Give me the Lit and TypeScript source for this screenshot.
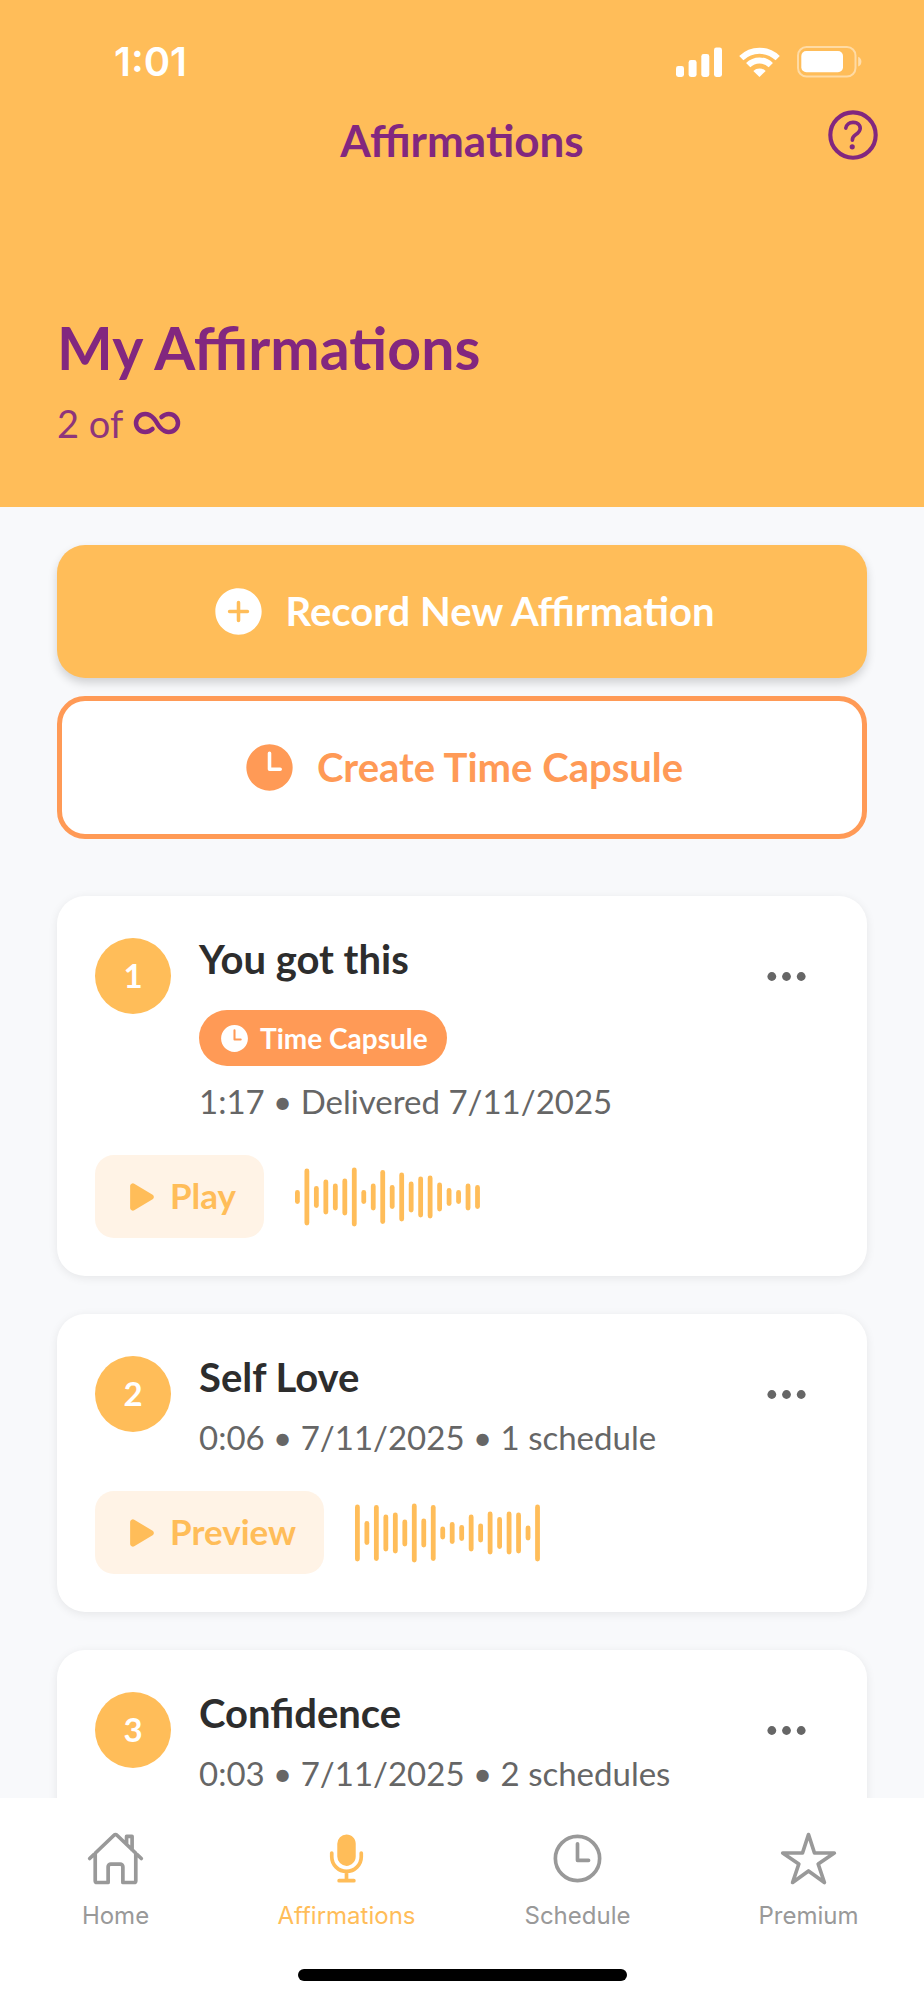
import { LitElement, html, svg, css, nothing } from "lit";
import { customElement, property } from "lit/decorators.js";

interface Affirmation {
  title: string;
  meta: string;
  capsule?: boolean;
  action?: string;
  wave?: number[];
}

const AFFIRMATIONS: Affirmation[] = [
  {
    title: "You got this",
    meta: "1:17 • Delivered 7/11/2025",
    capsule: true,
    action: "Play",
    wave: [14, 57, 22, 35, 27, 37, 59, 14, 27, 54, 24, 49, 31, 41, 43, 29, 18, 14, 27, 24],
  },
  {
    title: "Self Love",
    meta: "0:06 • 7/11/2025 • 1 schedule",
    action: "Preview",
    wave: [57, 24, 56, 37, 41, 27, 59, 29, 56, 13, 22, 16, 37, 19, 43, 32, 43, 41, 15, 57],
  },
  { title: "Confidence", meta: "0:03 • 7/11/2025 • 2 schedules" },
];

const round = (d: string, width = 32) =>
  svg`<path d=${d} fill="none" stroke="currentColor" stroke-width=${width} stroke-linecap="round" stroke-linejoin="round"/>`;
const solid = (d: string) => svg`<path d=${d} fill="currentColor"/>`;

const ICONS: Record<string, unknown> = {
  help: svg`<circle cx="256" cy="256" r="176" fill="none" stroke="currentColor" stroke-width="32"/>
    ${round("M200 202.29s.84-17.5 19.57-32.57C230.68 160.77 244 158.18 256 158c10.93-.14 20.69 1.67 26.53 4.45 10 4.76 29.47 16.38 29.47 41.09 0 26-17 37.81-36.37 50.8S251 281.43 251 296", 28)}
    <circle cx="250" cy="348" r="20" fill="currentColor"/>`,
  infinite: round(
    "M256 256s-48-96-126-96c-54.12 0-98 43-98 96s43.88 96 98 96c30 0 56.45-13.18 78-32M256 256s48 96 126 96c54.12 0 98-43 98-96s-43.88-96-98-96c-29.37 0-56.66 13.75-78 32",
    48
  ),
  add: solid(
    "M256 48C141.31 48 48 141.31 48 256s93.31 208 208 208 208-93.31 208-208S370.69 48 256 48zm80 224h-64v64a16 16 0 01-32 0v-64h-64a16 16 0 010-32h64v-64a16 16 0 0132 0v64h64a16 16 0 010 32z"
  ),
  time: solid(
    "M256 48C141.13 48 48 141.13 48 256s93.13 208 208 208 208-93.13 208-208S370.87 48 256 48zm96 240h-96a16 16 0 01-16-16V128a16 16 0 0132 0v128h80a16 16 0 010 32z"
  ),
  play: solid(
    "M133 440a35.37 35.37 0 01-17.5-4.67c-12-6.8-19.46-20-19.46-34.33V111c0-14.37 7.46-27.53 19.46-34.33a35.13 35.13 0 0135.77.45l247.85 148.36a36 36 0 010 61l-247.89 148.4A35.5 35.5 0 01133 440z"
  ),
  more: svg`<circle cx="96" cy="256" r="48" fill="currentColor"/><circle cx="256" cy="256" r="48" fill="currentColor"/><circle cx="416" cy="256" r="48" fill="currentColor"/>`,
  home: round(
    "M80 212v236a16 16 0 0016 16h96V328a24 24 0 0124-24h80a24 24 0 0124 24v136h96a16 16 0 0016-16V212M480 256L266.89 52c-5-5.28-16.69-5.34-21.78 0L32 256M400 179V64h-48v69"
  ),
  mic: svg`${round("M192 448h128M384 208v32c0 70.4-57.6 128-128 128s-128-57.6-128-128v-32M256 368v80")}
    ${solid("M256 320a78.83 78.83 0 01-56.55-24.1A80.89 80.89 0 01176 239V128a79.69 79.69 0 0180-80c44.86 0 80 35.14 80 80v111c0 44.66-35.89 81-80 81z")}`,
  clock: svg`<circle cx="256" cy="256" r="192" fill="none" stroke="currentColor" stroke-width="32"/>${round("M256 128v144h96")}`,
  star: round("M480 208H308L256 48l-52 160H32l140 96-54 160 138-100 138 100-54-160z"),
};

const icon = (name: string, size: number) =>
  html`<svg width=${size} height=${size} viewBox="0 0 512 512" aria-hidden="true">${ICONS[name]}</svg>`;

@customElement("affirmation-card")
class AffirmationCard extends LitElement {
  @property({ attribute: false }) item!: Affirmation;
  @property({ type: Number }) number = 1;

  static styles = css`
    :host {
      display: block;
      padding: 38px;
      background: #fff;
      border-radius: 28px;
      box-shadow: 0 2px 10px rgba(0, 0, 0, 0.08);
    }
    svg {
      display: block;
      flex: none;
    }
    button {
      border: 0;
      margin: 0;
      background: none;
      font: inherit;
      color: inherit;
      cursor: pointer;
    }
    .head {
      display: flex;
      align-items: flex-start;
    }
    .num {
      flex: none;
      width: 76px;
      height: 76px;
      margin: 4px 28px 0 0;
      border-radius: 50%;
      background: #ffbd59;
      color: #fff;
      font-size: 33px;
      font-weight: 700;
      line-height: 74px;
      text-align: center;
    }
    .info {
      flex: 1;
      min-width: 0;
      display: flex;
      flex-direction: column;
      align-items: flex-start;
      gap: 15px;
    }
    h2 {
      margin: 0;
      font-size: 40px;
      line-height: 50px;
      font-weight: 700;
      color: #2d2d2d;
    }
    .badge {
      display: flex;
      align-items: center;
      gap: 9px;
      margin-top: 11px;
      padding: 11px 19px;
      border-radius: 28px;
      background: #ff9a56;
      color: #fff;
      font-size: 28px;
      line-height: 34px;
      font-weight: 700;
    }
    p {
      margin: 0;
      font-size: 33px;
      line-height: 41px;
      color: #666;
    }
    .more {
      padding: 19px;
      color: #666;
    }
    .actions {
      display: flex;
      align-items: center;
      gap: 31px;
      margin-top: 33px;
      color: #ffbd59;
    }
    .play {
      display: flex;
      align-items: center;
      gap: 9px;
      padding: 20px 28px;
      border-radius: 19px;
      background: #fff3e6;
      font-size: 35px;
      line-height: 41px;
      font-weight: 700;
    }
    .play span {
      padding-bottom: 2px;
    }
  `;

  render() {
    const { title, meta, capsule, action, wave } = this.item;
    return html`
      <div class="head">
        <div class="num">${this.number}</div>
        <div class="info">
          <h2>${title}</h2>
          ${capsule ? html`<div class="badge">${icon("time", 33)}<span>Time Capsule</span></div>` : nothing}
          <p>${meta}</p>
        </div>
        <button class="more" aria-label="More options">${icon("more", 47)}</button>
      </div>
      ${action
        ? html`<div class="actions">
            <button class="play">${icon("play", 38)}<span>${action}</span></button>
            <svg width="185" height="60" viewBox="0 0 185 60" aria-hidden="true">
              ${(wave ?? []).map(
                (h, i) =>
                  svg`<rect x=${i * 9.48} y=${30 - h / 2} width="4.8" height=${h} rx="2.4" fill="currentColor"/>`
              )}
            </svg>
          </div>`
        : nothing}
    `;
  }
}

@customElement("app-root")
class AppRoot extends LitElement {
  static styles = css`
    :host {
      display: flex;
      flex-direction: column;
      height: 100vh;
      overflow: hidden;
      background: #f8f9fb;
      font-family: Lato, "Open Sans", sans-serif;
    }
    svg {
      display: block;
      flex: none;
    }
    button {
      margin: 0;
      border: 0;
      padding: 0;
      background: none;
      font: inherit;
      color: inherit;
      cursor: pointer;
    }
    header {
      flex: none;
      padding: 38px 0 60px;
      background: #ffbd59;
      color: #82277f;
    }
    .status {
      display: flex;
      align-items: center;
      gap: 17px;
      padding: 0 62px 0 114px;
      color: #fff;
      font-family: Inter, sans-serif;
      font-size: 40px;
      line-height: 48px;
      font-weight: 600;
    }
    .clock {
      flex: 1;
    }
    .bar {
      display: grid;
      grid-template-columns: 1fr auto 1fr;
      align-items: end;
      margin-top: 16px;
      padding: 0 38px;
    }
    .bar h1 {
      grid-column: 2;
      margin: 0;
      font-size: 44px;
      line-height: 56px;
      font-weight: 700;
    }
    .help {
      justify-self: end;
    }
    .intro {
      margin-top: 145px;
      padding: 0 57px;
    }
    .intro h2 {
      margin: 0;
      font-size: 59px;
      line-height: 70px;
      font-weight: 700;
    }
    .count {
      display: flex;
      align-items: center;
      gap: 10px;
      margin: 16px 0 0;
      font-size: 38px;
      line-height: 48px;
    }
    .count span {
      opacity: 0.9;
    }
    main {
      flex: 1;
      min-height: 0;
      overflow: hidden;
      padding: 38px 57px 0;
    }
    .buttons {
      display: flex;
      flex-direction: column;
      gap: 18px;
    }
    .big {
      display: flex;
      align-items: center;
      justify-content: center;
      gap: 19px;
      padding: 38px;
      border-radius: 28px;
      font-size: 40px;
      line-height: 48px;
      font-weight: 700;
    }
    .big span {
      padding-bottom: 2px;
    }
    .record {
      background: #ffbd59;
      color: #fff;
      box-shadow: 0 5px 10px rgba(0, 0, 0, 0.16);
    }
    .capsule {
      border: 5px solid #ff9a56;
      background: #fff;
      color: #ff9a56;
    }
    .list {
      display: flex;
      flex-direction: column;
      gap: 38px;
      margin: 57px 0 0;
      padding: 0;
      list-style: none;
    }
    footer {
      flex: none;
      padding: 31px 0 19px;
      background: #fff;
    }
    nav {
      display: grid;
      grid-template-columns: repeat(4, 1fr);
    }
    nav a {
      display: flex;
      flex-direction: column;
      align-items: center;
      gap: 13px;
      color: #999;
      font-family: Inter, sans-serif;
      font-size: 24px;
      line-height: 29px;
      text-decoration: none;
    }
    nav a.active {
      color: #ffbd59;
    }
    .indicator {
      width: 329px;
      height: 12px;
      margin: 39px auto 0;
      border-radius: 6px;
      background: #000;
    }
  `;

  render() {
    const tabs = [
      ["Home", "home"],
      ["Affirmations", "mic"],
      ["Schedule", "clock"],
      ["Premium", "star"],
    ];
    return html`
      <header>
        <div class="status">
          <span class="clock">1:01</span>
          <svg width="46" height="30" viewBox="0 0 46 30" fill="#fff" aria-hidden="true">
            <rect x="0" y="19" width="8" height="11" rx="2.4" />
            <rect x="12.6" y="13" width="8" height="17" rx="2.4" />
            <rect x="25.3" y="7" width="8" height="23" rx="2.4" />
            <rect x="38" y="0.5" width="8" height="29.5" rx="2.4" />
          </svg>
          <svg width="41" height="30" viewBox="0 0 41 30" aria-hidden="true">
            <g fill="none" stroke="#fff" stroke-width="6">
              <path d="M2.3 11.2a26 26 0 0 1 36.4 0" />
              <path d="M9.2 18.1a16 16 0 0 1 22.6 0" />
            </g>
            <path d="M20.5 30l-6.2-6.1a9.2 9.2 0 0 1 12.4 0z" fill="#fff" />
          </svg>
          <svg width="65" height="32" viewBox="0 0 65 32" aria-hidden="true">
            <rect x="1" y="1" width="57.5" height="29.5" rx="8.5" fill="none" stroke="#fff" stroke-opacity=".45" stroke-width="2" />
            <rect x="4.3" y="5" width="41.7" height="21.3" rx="5" fill="#fff" />
            <path d="M61.2 10.8c2 .8 3.2 2.7 3.2 4.9s-1.2 4.1-3.2 4.9z" fill="#fff" fill-opacity=".5" />
          </svg>
        </div>
        <div class="bar">
          <h1>Affirmations</h1>
          <button class="help" aria-label="Help">${icon("help", 66)}</button>
        </div>
        <div class="intro">
          <h2>My Affirmations</h2>
          <p class="count"><span>2 of</span>${icon("infinite", 48)}</p>
        </div>
      </header>
      <main>
        <div class="buttons">
          <button class="big record">${icon("add", 57)}<span>Record New Affirmation</span></button>
          <button class="big capsule">${icon("time", 57)}<span>Create Time Capsule</span></button>
        </div>
        <ul class="list">
          ${AFFIRMATIONS.map(
            (item, i) => html`<li><affirmation-card .item=${item} .number=${i + 1}></affirmation-card></li>`
          )}
        </ul>
      </main>
      <footer>
        <nav>
          ${tabs.map(
            ([label, name]) =>
              html`<a href="#" class=${name === "mic" ? "active" : ""}>${icon(name, 59)}<span>${label}</span></a>`
          )}
        </nav>
        <div class="indicator"></div>
      </footer>
    `;
  }
}
